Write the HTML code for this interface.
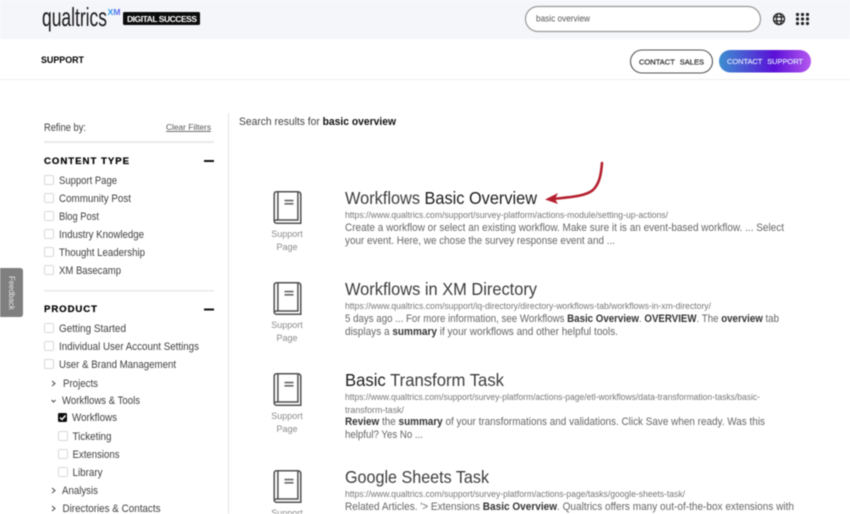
<!DOCTYPE html>
<html><head><meta charset="utf-8">
<style>
html,body{margin:0;padding:0;background:#fff;width:850px;height:514px;overflow:hidden}
svg{display:block;position:absolute;left:0;top:0;filter:blur(.45px)}
text{font-family:"Liberation Sans",sans-serif}
.b{font-size:11px;fill:#666}
.b tspan{fill:#333;font-weight:700}
.u{font-size:9px;fill:#777}
.t{font-size:17.6px;fill:#3c3c3c}
.t tspan{fill:#1c1c1c}
.f{font-size:11.2px;fill:#3f3f3f}
.l{font-size:9px;fill:#8a8a8a}
.h{font-size:9.6px;font-weight:700;fill:#000;stroke:#000;stroke-width:.2px}
.c{fill:#fff;stroke:#d8d8d8;stroke-width:1}
</style></head><body>
<svg width="850" height="514" viewBox="0 0 850 514" xmlns="http://www.w3.org/2000/svg">
<defs>
<linearGradient id="g" x1="0" x2="1" y1="0" y2="0"><stop offset="0" stop-color="#3d8fd0"/><stop offset=".6" stop-color="#5a10d8"/><stop offset="1" stop-color="#b65af0"/></linearGradient>
<linearGradient id="x" x1="0" x2="1" y1="0" y2="0"><stop offset="0" stop-color="#20a8e8"/><stop offset="1" stop-color="#6a5cf0"/></linearGradient>
<g id="book" fill="none" stroke="#4f4f4f" stroke-width="1.5">
<path d="M.7 3.2Q.7.7 3.2.7H24Q27.300.7 27.300 4V32.300H3.200Q.7 32.300.7 29.800Z"/>
<path d="M4.400.7V29H24.400V1"/>
<path d="M.9 29.800Q1.500 29 3.200 29H4.400"/>
<path d="M11 9.600H20M11 12.800H20" stroke="#666" stroke-width="1.600"/>
</g>
</defs>
<rect width="850" height="39" fill="#f5f6fa"/>
<rect y="79" width="850" height="1" fill="#efefef"/>
<text x="42" y="26" font-size="26" fill="#181818" textLength="65" lengthAdjust="spacingAndGlyphs">qualtrics</text>
<text x="107.500" y="15" font-size="8.500" font-weight="700" fill="url(#x)" textLength="13" lengthAdjust="spacingAndGlyphs">XM</text>
<rect x="123" y="12" width="77" height="13" rx="1.500" fill="#0c0c0c"/>
<text x="127" y="22" font-size="8.500" font-weight="700" fill="#fff" textLength="70" lengthAdjust="spacing">DIGITAL SUCCESS</text>
<rect x="525.500" y="6.500" width="235" height="25" rx="12.500" fill="#fff" stroke="#999" stroke-width="1.200"/>
<text x="536" y="21.500" font-size="9" fill="#555" textLength="54" lengthAdjust="spacingAndGlyphs">basic overview</text>
<g fill="none" stroke="#222" stroke-width="1.300"><circle cx="779" cy="19" r="5.500"/><ellipse cx="779" cy="19" rx="2.500" ry="5.500"/><path d="M773.500 17H784.500M773.500 21H784.500"/></g>
<g fill="#222"><circle cx="797.500" cy="14.500" r="1.600"/><circle cx="802.500" cy="14.500" r="1.600"/><circle cx="807.500" cy="14.500" r="1.600"/><circle cx="797.500" cy="19" r="1.600"/><circle cx="802.500" cy="19" r="1.600"/><circle cx="807.500" cy="19" r="1.600"/><circle cx="797.500" cy="23.500" r="1.600"/><circle cx="802.500" cy="23.500" r="1.600"/><circle cx="807.500" cy="23.500" r="1.600"/></g>
<text x="41" y="63" font-size="9" font-weight="700" fill="#000" textLength="43" lengthAdjust="spacingAndGlyphs">SUPPORT</text>
<rect x="630.500" y="50" width="82" height="23" rx="11.500" fill="#fff" stroke="#555" stroke-width="1.100"/>
<text x="639" y="64.500" font-size="7.500" fill="#333" stroke="#333" stroke-width=".25" style="word-spacing:3px" textLength="65" lengthAdjust="spacing">CONTACT SALES</text>
<rect x="719" y="50" width="92" height="22.500" rx="11.200" fill="url(#g)"/>
<text x="727" y="64" font-size="7.500" fill="#d5ddfa" stroke="#d5ddfa" stroke-width=".25" style="word-spacing:3px" textLength="76" lengthAdjust="spacing">CONTACT SUPPORT</text>

<text x="44" y="131" font-size="11" fill="#3f3f3f" textLength="42" lengthAdjust="spacingAndGlyphs">Refine by:</text>
<text x="166" y="130" font-size="8.500" fill="#555" text-decoration="underline" textLength="45" lengthAdjust="spacingAndGlyphs">Clear Filters</text>
<rect x="228" y="113" width="1" height="401" fill="#e2e2e2"/>
<text x="239" y="125" font-size="11" fill="#444" textLength="157" lengthAdjust="spacingAndGlyphs">Search results for <tspan font-weight="700" fill="#111">basic overview</tspan></text>

<rect x="44" y="141" width="170" height="2" fill="#e9e9e9"/>
<text class="h" x="44" y="164" textLength="85" lengthAdjust="spacing">CONTENT TYPE</text>
<rect x="204" y="160" width="10" height="2" fill="#111"/>
<rect class="c" x="44.500" y="175.500" width="9" height="9" rx="1.500"/><text class="f" x="59" y="184" textLength="58" lengthAdjust="spacingAndGlyphs">Support Page</text>
<rect class="c" x="44.500" y="193.500" width="9" height="9" rx="1.500"/><text class="f" x="59" y="202" textLength="72" lengthAdjust="spacingAndGlyphs">Community Post</text>
<rect class="c" x="44.500" y="211.500" width="9" height="9" rx="1.500"/><text class="f" x="59" y="220" textLength="40" lengthAdjust="spacingAndGlyphs">Blog Post</text>
<rect class="c" x="44.500" y="229.500" width="9" height="9" rx="1.500"/><text class="f" x="59" y="238" textLength="85" lengthAdjust="spacingAndGlyphs">Industry Knowledge</text>
<rect class="c" x="44.500" y="247.500" width="9" height="9" rx="1.500"/><text class="f" x="59" y="256" textLength="86" lengthAdjust="spacingAndGlyphs">Thought Leadership</text>
<rect class="c" x="44.500" y="265.500" width="9" height="9" rx="1.500"/><text class="f" x="59" y="274" textLength="62" lengthAdjust="spacingAndGlyphs">XM Basecamp</text>
<rect x="44" y="290" width="170" height="1.500" fill="#e9e9e9"/>
<text class="h" x="44" y="312" textLength="53" lengthAdjust="spacing">PRODUCT</text>
<rect x="204" y="308.500" width="10" height="2" fill="#111"/>
<rect class="c" x="44.500" y="323.500" width="9" height="9" rx="1.500"/><text class="f" x="59" y="332" textLength="67" lengthAdjust="spacingAndGlyphs">Getting Started</text>
<rect class="c" x="44.500" y="341.500" width="9" height="9" rx="1.500"/><text class="f" x="59" y="350" textLength="140" lengthAdjust="spacingAndGlyphs">Individual User Account Settings</text>
<rect class="c" x="44.500" y="359.500" width="9" height="9" rx="1.500"/><text class="f" x="59" y="368" textLength="117" lengthAdjust="spacingAndGlyphs">User &amp; Brand Management</text>
<path d="M52 381L55 383.500L52 386M52 488L55 490.500L52 493M52 506L55 508.500L52 511" fill="none" stroke="#444" stroke-width="1"/>
<path d="M51.500 400L53.500 402L55.500 400" fill="none" stroke="#444" stroke-width="1"/>
<text class="f" x="63" y="387" textLength="35" lengthAdjust="spacingAndGlyphs">Projects</text>
<text class="f" x="62" y="404" textLength="78" lengthAdjust="spacingAndGlyphs">Workflows &amp; Tools</text>
<rect x="58" y="413" width="9" height="9" rx="1.500" fill="#0c0c0c"/><path d="M60 417.500L62 419.500L65.500 415.500" fill="none" stroke="#fff" stroke-width="1.400"/>
<text class="f" x="72" y="421" textLength="45" lengthAdjust="spacingAndGlyphs">Workflows</text>
<rect class="c" x="58.500" y="431.500" width="9" height="9" rx="1.500"/><text class="f" x="72.500" y="440" textLength="39" lengthAdjust="spacingAndGlyphs">Ticketing</text>
<rect class="c" x="58.500" y="449.500" width="9" height="9" rx="1.500"/><text class="f" x="72.500" y="458" textLength="47" lengthAdjust="spacingAndGlyphs">Extensions</text>
<rect class="c" x="58.500" y="467.500" width="9" height="9" rx="1.500"/><text class="f" x="72.500" y="476" textLength="30" lengthAdjust="spacingAndGlyphs">Library</text>
<text class="f" x="62" y="494" textLength="36" lengthAdjust="spacingAndGlyphs">Analysis</text>
<text class="f" x="62.500" y="512" textLength="98" lengthAdjust="spacingAndGlyphs">Directories &amp; Contacts</text>

<path d="M0 268H20Q23 268 23 271V314Q23 317 20 317H0Z" fill="#7f7f7f"/>
<text transform="translate(9 276) rotate(90)" font-size="8.500" fill="#e8e8e8" textLength="34" lengthAdjust="spacingAndGlyphs">Feedback</text>

<use href="#book" x="273.500" y="191"/>
<text class="l" x="287" y="237" text-anchor="middle">Support</text><text class="l" x="287" y="250" text-anchor="middle">Page</text>
<text class="t" x="345" y="204" textLength="192" lengthAdjust="spacingAndGlyphs">Workflows <tspan>Basic Overview</tspan></text>
<text class="u" x="345" y="218" textLength="323" lengthAdjust="spacingAndGlyphs">https://www.qualtrics.com/support/survey-platform/actions-module/setting-up-actions/</text>
<text class="b" x="345" y="231" textLength="439" lengthAdjust="spacingAndGlyphs">Create a workflow or select an existing workflow. Make sure it is an event-based workflow. ... Select</text>
<text class="b" x="345" y="244" textLength="270" lengthAdjust="spacingAndGlyphs">your event. Here, we chose the survey response event and ...</text>

<use href="#book" x="273.500" y="282"/>
<text class="l" x="287" y="328" text-anchor="middle">Support</text><text class="l" x="287" y="341" text-anchor="middle">Page</text>
<text class="t" x="345" y="295" textLength="192" lengthAdjust="spacingAndGlyphs">Workflows in XM Directory</text>
<text class="u" x="345" y="309" textLength="366" lengthAdjust="spacingAndGlyphs">https://www.qualtrics.com/support/iq-directory/directory-workflows-tab/workflows-in-xm-directory/</text>
<text class="b" x="345" y="322" textLength="434" lengthAdjust="spacingAndGlyphs">5 days ago ... For more information, see Workflows <tspan>Basic Overview</tspan>. <tspan>OVERVIEW</tspan>. The <tspan>overview</tspan> tab</text>
<text class="b" x="345" y="335" textLength="273" lengthAdjust="spacingAndGlyphs">displays a <tspan>summary</tspan> if your workflows and other helpful tools.</text>

<use href="#book" x="273.500" y="373"/>
<text class="l" x="287" y="419" text-anchor="middle">Support</text><text class="l" x="287" y="432" text-anchor="middle">Page</text>
<text class="t" x="345" y="386" textLength="159" lengthAdjust="spacingAndGlyphs"><tspan>Basic</tspan> Transform Task</text>
<text class="u" x="345" y="400" textLength="415" lengthAdjust="spacingAndGlyphs">https://www.qualtrics.com/support/survey-platform/actions-page/etl-workflows/data-transformation-tasks/basic-</text>
<text class="u" x="345" y="413" textLength="59" lengthAdjust="spacingAndGlyphs">transform-task/</text>
<text class="b" x="345" y="425" textLength="420" lengthAdjust="spacingAndGlyphs"><tspan>Review</tspan> the <tspan>summary</tspan> of your transformations and validations. Click Save when ready. Was this</text>
<text class="b" x="345" y="438" textLength="78" lengthAdjust="spacingAndGlyphs">helpful? Yes No ...</text>

<use href="#book" x="273.500" y="470"/>
<text class="l" x="287" y="516" text-anchor="middle">Support</text>
<text class="t" x="345" y="483" textLength="144" lengthAdjust="spacingAndGlyphs">Google Sheets Task</text>
<text class="u" x="345" y="497" textLength="340" lengthAdjust="spacingAndGlyphs">https://www.qualtrics.com/support/survey-platform/actions-page/tasks/google-sheets-task/</text>
<text class="b" x="345" y="510" textLength="449" lengthAdjust="spacingAndGlyphs">Related Articles. '&gt; Extensions <tspan>Basic Overview</tspan>. Qualtrics offers many out-of-the-box extensions with</text>
<text class="b" x="345" y="523" textLength="300" lengthAdjust="spacingAndGlyphs">which you can connect your workflows to other tools.</text>

<path d="M602 163C601 176 599 184 593 190C586 196 572 197 552 199" fill="none" stroke="#b5202f" stroke-width="2.600" stroke-linecap="round"/>
<path d="M545 199.500L558 193L555 199L558 204Z" fill="#b5202f"/>
</svg>
</body></html>
